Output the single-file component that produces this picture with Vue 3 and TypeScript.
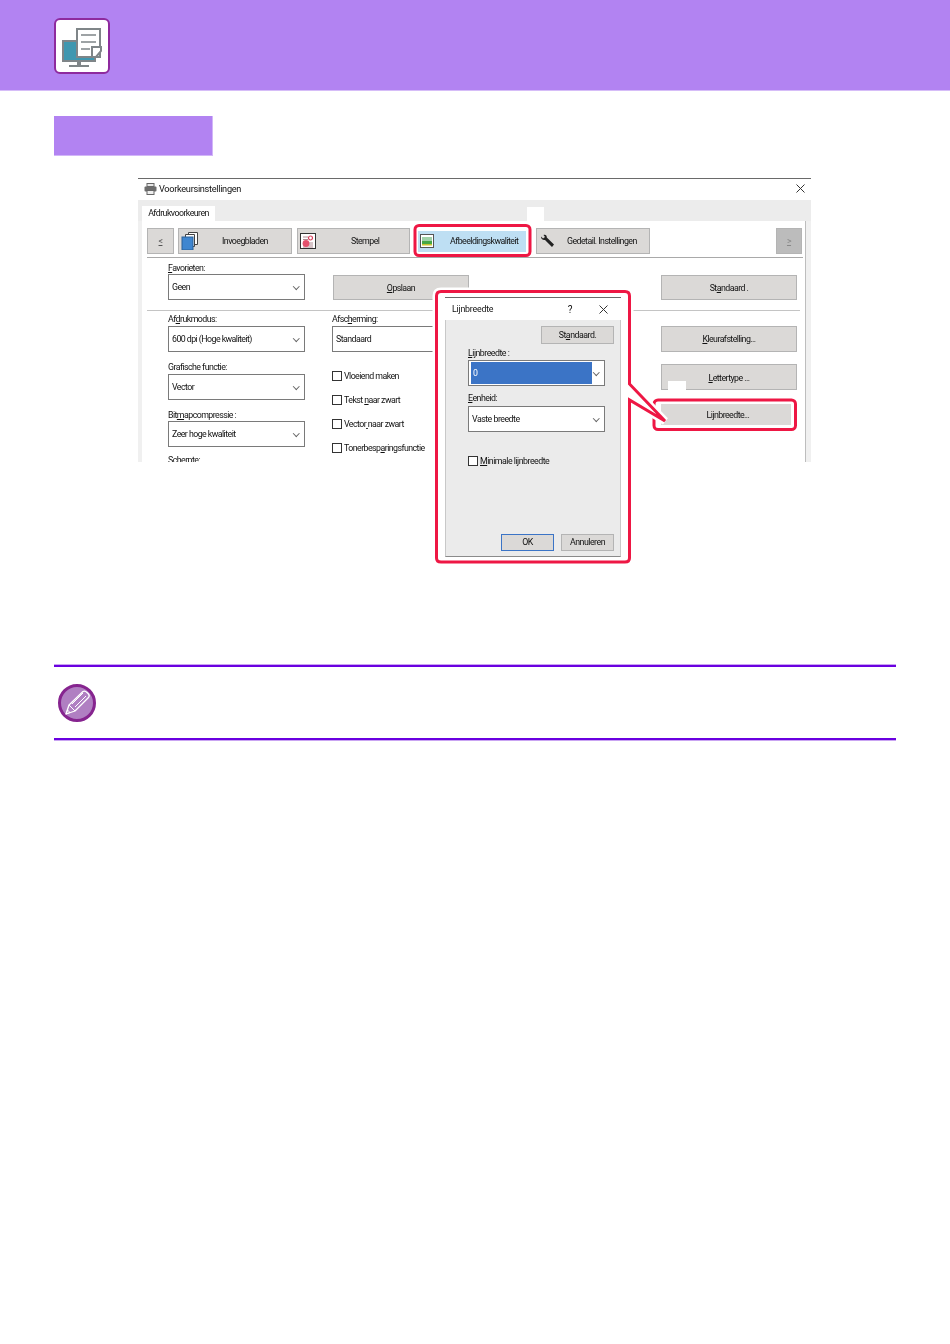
<script setup lang="ts">
const checks: [string, string, string][] = [
  ['Vloeiend maken', '', ''],
  ['Tekst ', 'n', 'aar zwart'],
  ['Vector', ' ', 'naar zwart'],
  ['Tonerbesp', 'a', 'ringsfunctie'],
]
</script>

<template>
  <div class="page">
    <header class="top">
      <div class="logo">
        <svg width="56" height="56" viewBox="54 18 56 56">
          <rect x="63" y="41" width="32" height="20" fill="#3f97b0" stroke="#7f8588" stroke-width="2" />
          <rect x="77" y="62" width="4" height="4" fill="#7f8588" />
          <rect x="69" y="65" width="20" height="2" fill="#7f8588" />
          <rect x="77" y="29" width="23" height="28" fill="#fff" stroke="#7f8588" stroke-width="2" />
          <path d="M81 35h15M81 42h15M81 49h9" stroke="#7f8588" stroke-width="1.5" />
          <path d="M92 47h9v4l-5 6h-4z" fill="#fff" stroke="#7f8588" stroke-width="2" />
        </svg>
      </div>
    </header>
    <div class="section"></div>

    <div class="figure">
      <div class="win">
        <div class="titlebar">
          <svg width="13" height="12" viewBox="0 0 13 12">
            <rect x="3" y="0.5" width="7" height="3" fill="#e8e8e8" stroke="#666" />
            <rect x="0.5" y="3.5" width="12" height="5" rx="1" fill="#6d6d6d" />
            <rect x="3" y="7.5" width="7" height="4" fill="#eee" stroke="#666" />
          </svg>
          <span class="wintitle">Voorkeursinstellingen</span>
          <svg class="close" width="9" height="9" viewBox="0 0 9 9"><path d="M.5.5l8 8M8.5.5l-8 8" stroke="#333" fill="none" /></svg>
        </div>
        <div class="tabstrip"><div class="tab">Afdrukvoorkeuren</div></div>
        <div class="patch patch-tab"></div>
        <div class="panel">
          <div class="tabs">
            <div class="btn nav"><u>&lt;</u></div>
            <div class="btn t-inv">
              <svg width="18" height="18" viewBox="0 0 18 18">
                <path d="M7.5.5h9v12h-9z" fill="#fff" stroke="#444" />
                <path d="M4.5 2.5h9v12h-9z" fill="#fff" stroke="#444" />
                <rect x="1" y="5" width="11" height="13" fill="#3f86d0" stroke="#2b5f96" />
              </svg>
              <span>Invoegbladen</span>
            </div>
            <div class="btn t-stamp">
              <svg width="16" height="16" viewBox="0 0 16 16">
                <rect x=".5" y=".5" width="15" height="15" fill="#fff" stroke="#333" />
                <path d="M3 4h5M3 6.500h5M3 10h10M3 12h10M3 14h10" stroke="#b08a92" />
                <circle cx="10.500" cy="5" r="2" fill="none" stroke="#d9415e" stroke-width="1.200" />
                <circle cx="6" cy="10.500" r="3.400" fill="#e4506c" />
              </svg>
              <span>Stempel</span>
            </div>
            <div class="t-active">
              <svg width="14" height="14" viewBox="0 0 14 14">
                <rect x=".5" y=".5" width="13" height="13" fill="#fff" stroke="#555" />
                <rect x="2" y="3" width="10" height="4" fill="#9fd2a8" />
                <rect x="2" y="7" width="10" height="3" fill="#46a846" />
                <rect x="2" y="10" width="10" height="1.500" fill="#c9c22e" />
              </svg>
              <span>Afbeeldingskwaliteit</span>
            </div>
            <div class="btn t-det">
              <svg width="15" height="15" viewBox="0 0 15 15">
                <path d="M1 2.500 3 4.500 5 3 3.500 1C5.500.2 7 1.500 6.800 3.500L14 10.500 12 13 5 6C3 6.500.8 5 1 2.500z" fill="#222" />
              </svg>
              <span>Gedetail. Instellingen</span>
            </div>
            <div class="btn nav-next"><u>&gt;</u></div>
          </div>
          <div class="rule rule-a"></div>

          <div class="row row-fav">
            <div class="col-left">
              <label class="lbl"><u>F</u>avorieten:</label>
              <div class="sel"><span>Geen</span><i class="chev"></i></div>
            </div>
            <div class="col-mid"><div class="btn wide save"><span><u>O</u>pslaan</span></div></div>
            <div class="col-right"><div class="btn wide std"><span>St<u>a</u>ndaard .</span></div></div>
          </div>
          <div class="rule rule-b"></div>

          <div class="row">
            <div class="col-left">
              <label class="lbl first">Af<u>d</u>rukmodus:</label>
              <div class="sel"><span>600 dpi (Hoge kwaliteit)</span><i class="chev"></i></div>
              <label class="lbl next">Grafische functie:</label>
              <div class="sel"><span>Vector</span><i class="chev"></i></div>
              <label class="lbl next">Bit<u>m</u>apcompressie :</label>
              <div class="sel"><span>Zeer hoge kwaliteit</span><i class="chev"></i></div>
              <label class="lbl last">Scherpte:</label>
            </div>
            <div class="col-mid">
              <label class="lbl first">Afsc<u>h</u>erming:</label>
              <div class="sel"><span>Standaard</span></div>
              <div class="checks">
                <div v-for="c in checks" :key="c[0]" class="check">
                  <i class="box"></i><span>{{ c[0] }}<u>{{ c[1] }}</u>{{ c[2] }}</span>
                </div>
              </div>
            </div>
            <div class="col-right">
              <div class="btn wide kleur"><span><u>K</u>leurafstelling...</span></div>
              <div class="btn wide letter"><span><u>L</u>ettertype ...</span></div>
              <div class="patch patch-letter"></div>
              <div class="btn lijn"><span>Lijnbreedte...</span></div>
            </div>
          </div>
        </div>
      </div>

      <svg class="overlay" width="680" height="392" viewBox="138 178 680 392">
        <rect x="415" y="225.500" width="115" height="30" rx="4" fill="none" stroke="#ee1744" stroke-width="3" />
        <rect x="654" y="400" width="141.500" height="29.500" rx="4" fill="none" stroke="#ee1744" stroke-width="3" />
        <path class="halo" d="M441 291.500H625Q629.500 291.500 629.500 296V384L665 421 629.500 400V558Q629.500 562 625 562H441Q436.500 562 436.500 558V296Q436.500 291.500 441 291.500Z" />
        <path class="callout" d="M441 291.500H625Q629.500 291.500 629.500 296V384L665 421 629.500 400V558Q629.500 562 625 562H441Q436.500 562 436.500 558V296Q436.500 291.500 441 291.500Z" />
      </svg>

      <div class="dialog">
        <div class="dlg-title">
          <span>Lijnbreedte</span>
          <span class="q">?</span>
          <svg width="9" height="9" viewBox="0 0 9 9"><path d="M.5.5l8 8M8.500.5l-8 8" stroke="#333" fill="none" /></svg>
        </div>
        <div class="dlg-body">
          <div class="btn dlg-std"><span>St<u>a</u>ndaard.</span></div>
          <label class="lbl d-lbl1"><u>L</u>ijnbreedte :</label>
          <div class="sel d-sel"><span class="picked">0</span><i class="chev"></i></div>
          <label class="lbl d-lbl2"><u>E</u>enheid:</label>
          <div class="sel d-sel"><span>Vaste breedte</span><i class="chev"></i></div>
          <div class="check d-check"><i class="box"></i><span><u>M</u>inimale lijnbreedte</span></div>
          <div class="d-actions">
            <div class="btn ok"><span>OK</span></div>
            <div class="btn cancel"><span>Annuleren</span></div>
          </div>
        </div>
      </div>
    </div>

    <div class="note">
      <svg width="40" height="40" viewBox="0 0 40 40">
        <circle cx="20" cy="20" r="17.500" fill="#b07fc2" stroke="#86248f" stroke-width="3" />
        <path d="M9 31 12 22 26 8.500Q28 7.500 30 9.500L31.500 11Q33 13 31.500 14.500L18 28Z" fill="none" stroke="#fff" stroke-width="1.300" stroke-linejoin="round" />
        <path d="M12 22 18 28M15 21 26 10M18 24 29 13M9 31 13 29.500 10.500 27Z" fill="none" stroke="#fff" />
      </svg>
    </div>
  </div>
</template>

<style>
html, body { background: #fff; }
</style>

<style scoped>
.page { width: 950px; height: 1344px; background: #fff; overflow: hidden; font-family: Roboto, "Noto Sans", sans-serif; color: #111; }
.top { height: 90px; background: #b283f2; border-bottom: 1px solid #d6bdf8; padding: 0 0 0 54px; display: flex; align-items: center; }
.logo { width: 56px; height: 56px; margin-top: 2px; border: 2px solid #8e2a9e; border-radius: 6px; background: #fff; box-sizing: border-box; display: flex; align-items: center; justify-content: center; overflow: hidden; }
.logo svg { flex: none; }
.section { width: 158px; height: 39px; margin: 25px 0 0 54px; background: #b283f2; border-right: 1px solid #d2b6f8; border-bottom: 1px solid #d2b6f8; }

.figure { position: relative; width: 673px; height: 386px; margin: 22px 0 0 138px; }
.win { position: relative; width: 673px; height: 284px; overflow: hidden; background: #f0f0f0; border-top: 1px solid #6a6a6a; box-sizing: border-box; font-size: 8.800px; letter-spacing: -.55px; filter: blur(.35px); }
.titlebar { height: 21px; background: #fff; display: flex; align-items: center; padding: 0 6px 2px; gap: 2px; box-sizing: border-box; }
.wintitle { font-size: 9.200px; letter-spacing: -.3px; }
.close { margin-left: auto; }
.tabstrip { height: 21px; background: #ececec; padding-left: 4px; display: flex; align-items: flex-end; }
.tab { width: 73px; height: 15px; background: #fff; text-align: center; line-height: 14px; }
.patch { position: absolute; background: #fff; }
.patch-tab { left: 389px; top: 28px; width: 17px; height: 15px; }
.panel { margin: 0 5px 0 4px; width: 664px; height: 241px; background: #fff; border-right: 1px solid #bdbdbd; box-sizing: border-box; padding-top: 7px; }
.tabs { display: flex; height: 26px; padding-left: 5px; align-items: center; }
.btn { background: #dbd9d7; border: 1px solid #b4b4b4; box-sizing: border-box; display: flex; align-items: center; position: relative; }
.btn span, .sel span, .lbl, .check span { position: relative; top: -.5px; }
.nav { width: 27px; height: 26px; justify-content: center; color: #555; }
.t-inv { width: 114px; height: 26px; margin-left: 4px; padding-left: 2px; }
.t-inv span { margin-left: 23px; }
.t-stamp { width: 113px; height: 26px; margin-left: 5px; padding-left: 2px; }
.t-stamp span { margin-left: 35px; }
.t-active { width: 108px; height: 21px; margin-left: 8px; background: #bedff3; display: flex; align-items: center; padding-left: 2px; box-sizing: border-box; }
.t-active span { margin-left: 16px; }
.t-det { width: 114px; height: 26px; margin-left: 10px; padding-left: 3px; }
.t-det span { margin-left: 12px; }
.nav-next { width: 26px; height: 26px; margin-left: 126px; justify-content: center; background: #bcbcbc; color: #888; }
.rule { height: 1px; background: #a9a9a9; }
.rule-a { margin: 3px 2px 0 5px; }
.rule-b { margin: 10px 5px 0 5px; background: #c4c4c4; }
.row { display: flex; }
.row-fav { padding-top: 5px; }
.col-left { width: 137px; margin-left: 26px; }
.col-mid { width: 137px; margin-left: 27px; }
.col-right { width: 136px; margin-left: 192px; position: relative; }
.lbl { display: block; height: 11px; line-height: 11px; }
.first { margin-top: 3px; height: 12px; }
.next { margin-top: 10px; height: 12px; }
.next:nth-of-type(3) { height: 11px; }
.last { margin-top: 8px; }
.sel { height: 26px; border: 1px solid #7a7a7a; background: #fff; box-sizing: border-box; display: flex; align-items: center; padding: 0 4px 0 3px; }
.chev { margin-left: auto; width: 3.500px; height: 3.500px; margin-right: 2px; margin-top: -2px; border-right: 1px solid #666; border-bottom: 1px solid #666; transform: rotate(45deg); }
.wide { width: 136px; height: 26px; justify-content: center; }
.save { margin-left: 1px; }
.save, .std { margin-top: 12px; height: 25px; }
.save span, .std span, .letter span { top: .5px; }
.checks { margin-top: 19px; display: flex; flex-direction: column; gap: 14px; }
.check { display: flex; align-items: center; height: 10px; gap: 2px; }
.box { width: 10px; height: 10px; box-sizing: border-box; border: 1px solid #333; background: #fff; flex: none; }
.kleur { margin-top: 15px; }
.letter { margin-top: 12px; }
.patch-letter { left: 7px; top: 70px; width: 18px; height: 9px; }
.lijn { width: 130px; height: 21px; margin-top: 14px; justify-content: center; border: 0; padding-left: 4px; }
.lijn span { top: .5px; }

.overlay { position: absolute; left: 0; top: 0; pointer-events: none; }
.halo { fill: #fff; stroke: #fff; stroke-width: 8px; }
.callout { fill: #fff; stroke: #ee1744; stroke-width: 3px; stroke-linejoin: miter; }

.dialog { position: absolute; left: 307px; top: 119px; width: 176px; height: 260px; font-size: 8.800px; letter-spacing: -.5px; border-top: 1px solid #6a6a6a; box-sizing: border-box; display: flex; flex-direction: column; filter: blur(.35px); }
.dlg-title { height: 22px; flex: none; background: #fff; display: flex; align-items: center; padding: 0 13px 0 7px; }
.dlg-title span:first-child { letter-spacing: -.2px; }
.q { margin-left: auto; margin-right: 27px; font-size: 10px; }
.dlg-body { flex: 1; background: #ebebeb; border: 1px solid #c8c8c8; border-top: 0; border-bottom-color: #8a8a8a; padding: 6px 6px 5px 22px; display: flex; flex-direction: column; }
.dlg-std { width: 73px; height: 18px; align-self: flex-end; justify-content: center; }
.d-lbl1 { margin-top: 4px; height: 12px; }
.d-sel { width: 137px; }
.picked { background: #3b74c6; color: #fff; width: 121px; height: 22px; margin-left: 1px; padding-left: 2px; line-height: 22px; box-sizing: border-box; top: 0 !important; }
.d-sel:has(.picked) { padding-left: 1px; }
.d-lbl2 { margin-top: 7px; height: 13px; }
.d-check { margin-top: 24px; }
.d-actions { margin-top: auto; display: flex; justify-content: flex-end; gap: 7px; }
.ok { width: 53px; height: 17px; justify-content: center; border: 1px solid #3b74c6; }
.cancel { width: 53px; height: 17px; justify-content: center; }

.note { margin: 101px 54px 0; height: 71px; border-top: 2px solid #6a00e0; border-bottom: 2px solid #6a00e0; display: flex; align-items: center; padding-left: 3px; box-shadow: 0 -1px 0 #c9a4f2, 0 1px 0 #c9a4f2; }
</style>
